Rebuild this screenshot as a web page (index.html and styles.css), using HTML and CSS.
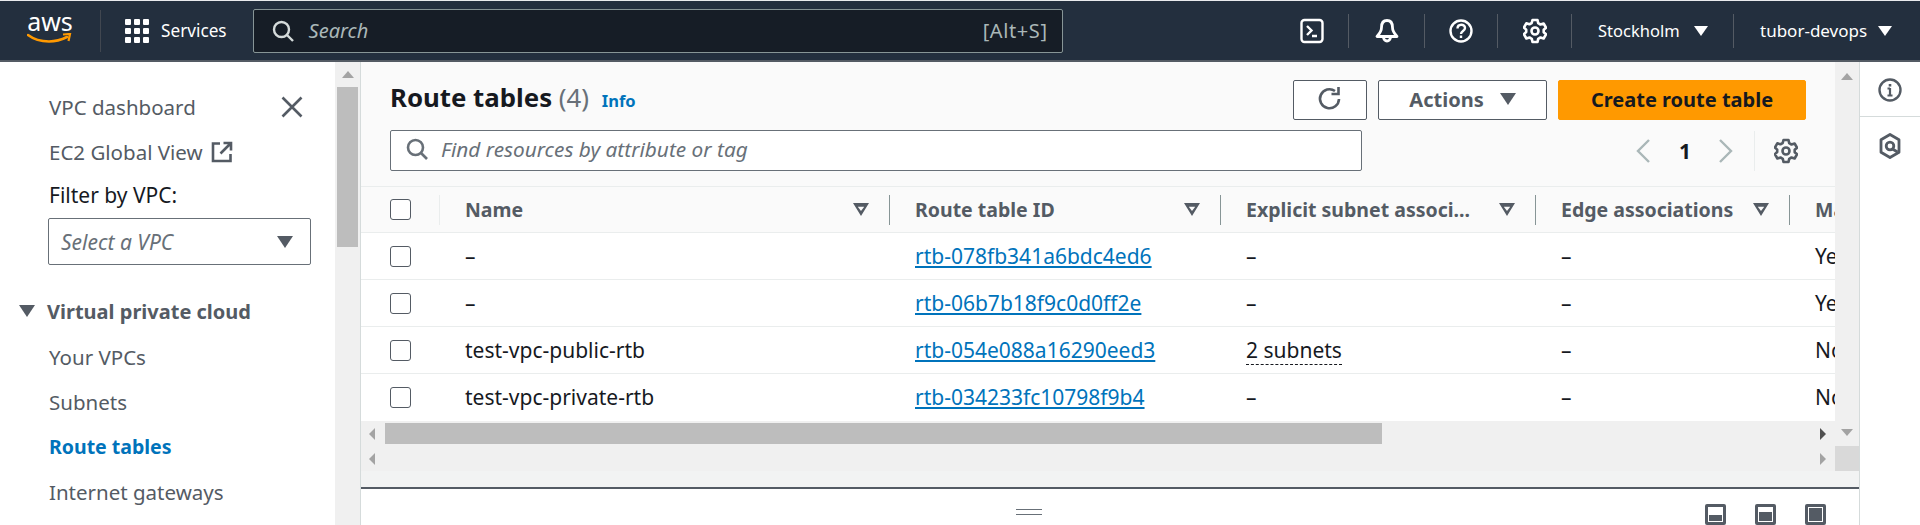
FILE: index.html
```html
<!DOCTYPE html>
<html lang="en">
<head>
    <meta charset="UTF-8">
    <title>Route tables | VPC Console</title>
    <link rel="stylesheet" href="styles.css">
</head>
<body>
    <header class="topbar">
        <div class="logo">
            <span class="logo-text">aws</span>
            <svg class="logo-smile" width="46" height="12" viewBox="0 0 46 12"><path d="M1 2c6 4.500 13 6.500 21 6.500 6 0 12-1.500 18-4.500" fill="none" stroke="#f90" stroke-width="2.600" stroke-linecap="round"/><path d="M36 1.500l7-.5-1.500 7" fill="none" stroke="#f90" stroke-width="2.200"/></svg>
        </div>
        <div class="services">
            <svg width="24" height="24" viewBox="0 0 24 24" fill="#fff"><rect width="6" height="6" rx="1"/><rect x="9" width="6" height="6" rx="1"/><rect x="18" width="6" height="6" rx="1"/><rect y="9" width="6" height="6" rx="1"/><rect x="9" y="9" width="6" height="6" rx="1"/><rect x="18" y="9" width="6" height="6" rx="1"/><rect y="18" width="6" height="6" rx="1"/><rect x="9" y="18" width="6" height="6" rx="1"/><rect x="18" y="18" width="6" height="6" rx="1"/></svg>
            <span>Services</span>
        </div>
        <div class="top-search">
            <svg width="22" height="22" viewBox="0 0 22 22" fill="none" stroke="#d5dbdb" stroke-width="2.400"><circle cx="9.500" cy="9.500" r="7.500"/><path d="M15 15l6 6"/></svg>
            <span class="top-search-text">Search</span>
            <span class="top-search-key">[Alt+S]</span>
        </div>
        <div class="top-right">
            <div class="top-item item-term">
                <svg width="24" height="26" viewBox="0 0 24 26" fill="none" stroke="#fff" stroke-width="2.400"><rect x="1.500" y="2" width="21" height="22" rx="3"/><path d="M7 8l4.500 4.500L7 17M12 18h5"/></svg>
            </div>
            <div class="top-item item-bell">
                <svg width="24" height="26" viewBox="0 0 24 26" fill="none" stroke="#fff" stroke-width="2.800" stroke-linejoin="round"><path d="M12 2.500c-4 0-5.500 3-5.500 7 0 4-2 6-4.500 9h20c-2.500-3-4.500-5-4.500-9 0-4-1.500-7-5.500-7z"/><path d="M8.500 19a3.500 4 0 0 0 7 0"/></svg>
            </div>
            <div class="top-item item-help">
                <svg width="24" height="24" viewBox="0 0 24 24" fill="none" stroke="#fff" stroke-width="2.400"><circle cx="12" cy="12" r="10.500"/><path d="M8.500 9.500c0-5 7.500-5 7.500-.5 0 3-4 3-4 6"/><path d="M12 16.500v2.500"/></svg>
            </div>
            <div class="top-item item-gear">
                <svg width="24" height="26" viewBox="0 0 24 26" fill="none" stroke="#fff" stroke-width="2.600" stroke-linejoin="round"><use href="#gear-shape"/></svg>
            </div>
            <div class="top-item top-menu top-region">Stockholm <span class="caret-white"></span></div>
            <div class="top-item top-menu top-user">tubor-devops <span class="caret-white"></span></div>
        </div>
    </header>

    <svg class="defs" width="0" height="0"><defs>
        <g id="gear-shape"><path d="M9.500 2h5l.7 3.200 2.300 1.300 3.100-1 2.400 4.200-2.300 2.100v2.400l2.300 2.100-2.400 4.200-3.100-1-2.300 1.300-.7 3.200h-5l-.7-3.200-2.300-1.300-3.100 1L.9 16.100l2.300-2.100v-2.400L.9 9.500l2.400-4.200 3.100 1 2.300-1.300z"/><circle cx="12" cy="13" r="3.500"/></g>
    </defs></svg>

    <div class="main">
        <nav class="sidebar">
            <div class="nav-top">
                <a class="nav-link">VPC dashboard</a>
                <svg width="22" height="22" viewBox="0 0 22 22" stroke="#545b64" stroke-width="2.600"><path d="M1.500 1.500l19 19M20.500 1.500l-19 19"/></svg>
            </div>
            <a class="nav-link nav-row">EC2 Global View
                <svg width="22" height="22" viewBox="0 0 22 22" fill="none" stroke="#545b64" stroke-width="2.600"><path d="M9 2.500H2v17.500h17.500V13"/><path d="M12.500 2h7.500v7.500M20 2L9.500 12.500"/></svg>
            </a>
            <div class="filter-label">Filter by VPC:</div>
            <div class="vpc-select">
                <span>Select a VPC</span>
                <span class="caret-gray"></span>
            </div>
            <div class="nav-group"><span class="caret-gray"></span>Virtual private cloud</div>
            <a class="nav-link nav-row">Your VPCs</a>
            <a class="nav-link nav-row">Subnets</a>
            <a class="nav-link nav-row nav-active">Route tables</a>
            <a class="nav-link nav-row">Internet gateways</a>
        </nav>
        <div class="side-scroll">
            <span class="arrow-up"></span>
            <div class="side-thumb"></div>
        </div>

        <div class="center">
            <div class="scroller">
                <section class="page">
                    <div class="page-head">
                        <div class="head-row">
                            <h1>Route tables <span class="count">(4)</span> <a class="info">Info</a></h1>
                            <button class="btn btn-refresh">
                                <svg width="26" height="26" viewBox="0 0 26 26" fill="none" stroke="#545b64" stroke-width="2.600"><path d="M22 13a9.500 9.500 0 1 1-4-8"/><path d="M21.500 1v7h-7"/></svg>
                            </button>
                            <button class="btn btn-actions">Actions <span class="caret-gray"></span></button>
                            <button class="btn btn-primary">Create route table</button>
                        </div>
                        <div class="tool-row">
                            <div class="res-filter">
                                <svg width="22" height="22" viewBox="0 0 22 22" fill="none" stroke="#687078" stroke-width="2.600"><circle cx="9.500" cy="9.500" r="7.500"/><path d="M15 15l6 6"/></svg>
                                <span>Find resources by attribute or tag</span>
                            </div>
                            <div class="pager">
                                <svg width="16" height="26" viewBox="0 0 16 26" fill="none" stroke="#aab7b8" stroke-width="2.400"><path d="M14 2L3 13l11 11"/></svg>
                                <span class="page-num">1</span>
                                <svg width="16" height="26" viewBox="0 0 16 26" fill="none" stroke="#aab7b8" stroke-width="2.400"><path d="M2 2l11 11L2 24"/></svg>
                                <div class="pager-gear">
                                    <svg width="24" height="26" viewBox="0 0 24 26" fill="none" stroke="#545b64" stroke-width="2.600" stroke-linejoin="round"><use href="#gear-shape"/></svg>
                                </div>
                            </div>
                        </div>
                    </div>

                    <div class="table-wrap">
                        <table class="rt-table">
                            <colgroup>
                                <col class="col-check"><col class="col-name"><col class="col-id"><col class="col-subnet"><col class="col-edge"><col class="col-main">
                            </colgroup>
                            <thead>
                                <tr>
                                    <th><div class="th-in th-check"><span class="check"></span></div></th>
                                    <th><div class="th-in">Name<span class="sort"></span></div></th>
                                    <th><div class="th-in">Route table ID<span class="sort"></span></div></th>
                                    <th><div class="th-in">Explicit subnet associ...<span class="sort"></span></div></th>
                                    <th><div class="th-in">Edge associations<span class="sort"></span></div></th>
                                    <th><div class="th-in th-last">Main</div></th>
                                </tr>
                            </thead>
                            <tbody>
                                <tr><td class="td-check"><span class="check"></span></td><td>–</td><td><a class="link">rtb-078fb341a6bdc4ed6</a></td><td>–</td><td>–</td><td>Yes</td></tr>
                                <tr><td class="td-check"><span class="check"></span></td><td>–</td><td><a class="link">rtb-06b7b18f9c0d0ff2e</a></td><td>–</td><td>–</td><td>Yes</td></tr>
                                <tr><td class="td-check"><span class="check"></span></td><td>test-vpc-public-rtb</td><td><a class="link">rtb-054e088a16290eed3</a></td><td><span class="dotted">2 subnets</span></td><td>–</td><td>No</td></tr>
                                <tr><td class="td-check"><span class="check"></span></td><td>test-vpc-private-rtb</td><td><a class="link">rtb-034233fc10798f9b4</a></td><td>–</td><td>–</td><td>No</td></tr>
                            </tbody>
                        </table>
                    </div>

                    <div class="hbar hbar-main">
                        <span class="arrow-left"></span>
                        <div class="hbar-thumb"></div>
                        <span class="arrow-right arrow-dark"></span>
                    </div>
                    <div class="hbar hbar-second">
                        <span class="arrow-left"></span>
                        <span class="arrow-right"></span>
                    </div>
                </section>
                <div class="page-scroll">
                    <div class="page-track">
                        <span class="arrow-up"></span>
                        <span class="arrow-down"></span>
                    </div>
                    <div class="page-corner"></div>
                </div>
            </div>

            <div class="split-panel">
                <div class="handle"></div>
                <div class="panel-icons">
                    <span class="panel-icon"><span class="fill-low"></span></span>
                    <span class="panel-icon"><span class="fill-mid"></span></span>
                    <span class="panel-icon"><span class="fill-full"></span></span>
                </div>
            </div>
        </div>

        <aside class="rail">
            <div class="rail-item rail-first">
                <svg width="24" height="24" viewBox="0 0 24 24" fill="none" stroke="#545b64" stroke-width="2.400"><circle cx="12" cy="12" r="10.500"/><path d="M12 10v8M9.500 10.500H12M9.500 17.500h5" stroke-width="2.200"/><path d="M12 6v2.500" stroke-width="2.600"/></svg>
            </div>
            <div class="rail-item">
                <svg width="22" height="26" viewBox="0 0 22 26" fill="none" stroke="#545b64" stroke-width="2.800" stroke-linejoin="round"><path d="M11 1.500l9 5.200v12.600l-9 5.200-9-5.200V6.700z"/><circle cx="11" cy="13" r="3.800"/><path d="M13.500 16l5 3"/></svg>
            </div>
        </aside>
    </div>
</body>
</html>
```

FILE: styles.css
```css
html, body { margin: 0; padding: 0; height: 100%; overflow: hidden; }
body { font-family: "Noto Sans", "Liberation Sans", sans-serif; font-size: 21px; color: #16191f; background: #fff; }
.defs { display: block; height: 0; }

/* top bar */
.topbar { display: flex; align-items: center; height: 59px; border-top: 1px solid #e9ebed; border-bottom: 2px solid #545b64; background: #232f3e; color: #fff; }
.logo { display: flex; flex-direction: column; align-items: center; width: 46px; margin-left: 27px; padding-right: 27px; border-right: 1px solid #414750; height: 42px; }
.logo-text { font-size: 25px; line-height: 26px; margin-top: -2px; }
.logo-smile { margin-top: -1px; flex-shrink: 0; }
.services { display: flex; align-items: center; gap: 12px; margin-left: 24px; font-size: 17.200px; }
.top-search { display: flex; align-items: center; width: 810px; height: 44px; margin-left: 26px; padding: 0 14px 0 18px; box-sizing: border-box; background: #161d26; border: 1px solid #879596; border-radius: 2px; font-size: 20px; }
.top-search-text { margin-left: 15px; font-style: italic; color: #aab7b8; flex: 1; }
.top-search-key { color: #aab7b8; letter-spacing: .6px; }
.top-right { display: flex; align-items: center; margin-left: auto; }
.top-item { display: flex; align-items: center; justify-content: center; box-sizing: border-box; height: 34px; border-right: 1px solid #545b64; }
.item-term { width: 74px; }
.item-bell { width: 76px; }
.item-help { width: 73px; }
.item-gear { width: 74px; }
.top-menu { justify-content: flex-start; padding-left: 26px; }
.top-region { width: 162px; gap: 14px; font-size: 16.500px; }
.top-user { width: 186px; gap: 11px; border-right: none; font-size: 17px; }
.caret-white { display: inline-block; border-left: 7px solid transparent; border-right: 7px solid transparent; border-top: 10px solid #fff; }
.caret-gray { display: inline-block; border-left: 8px solid transparent; border-right: 8px solid transparent; border-top: 12px solid #545b64; }

/* layout */
.main { display: flex; height: 464px; }
.sidebar { width: 335px; flex-shrink: 0; padding-top: 22px; box-sizing: border-box; color: #545b64; font-size: 20.500px; }
.nav-top { display: flex; align-items: center; justify-content: space-between; height: 45px; padding: 0 32px 0 49px; }
.nav-link { color: #545b64; }
.nav-row { display: flex; align-items: center; gap: 8px; height: 45px; padding-left: 49px; }
.nav-active { color: #0073bb; font-weight: 700; font-size: 19.500px; }
.filter-label { height: 44px; line-height: 42px; padding-left: 49px; color: #16191f; font-size: 21px; }
.vpc-select { display: flex; align-items: center; justify-content: space-between; width: 263px; height: 47px; margin-left: 48px; padding: 0 17px 0 12px; box-sizing: border-box; border: 1px solid #687078; border-radius: 2px; font-style: italic; font-size: 21px; color: #687078; }
.nav-group { display: flex; align-items: center; gap: 12px; height: 46px; margin-top: 23px; padding-left: 19px; font-weight: 700; font-size: 20px; }
.side-scroll { width: 25px; flex-shrink: 0; padding-top: 9px; background: #f0f0f0; border-right: 1px solid #d5dbdb; text-align: center; }
.side-thumb { width: 21px; height: 160px; margin: 9px auto 0; background: #bdbdbd; }
.arrow-up { display: block; width: 0; margin: 0 auto; border-left: 6px solid transparent; border-right: 6px solid transparent; border-bottom: 7px solid #a3a3a3; }
.arrow-down { display: block; width: 0; margin: 0 auto; border-left: 6px solid transparent; border-right: 6px solid transparent; border-top: 7px solid #a3a3a3; }

.center { display: flex; flex-direction: column; width: 1498px; flex-shrink: 0; }
.scroller { display: flex; height: 425px; flex-shrink: 0; background: #f2f3f3; }
.page { width: 1474px; flex-shrink: 0; }
.page-head { height: 125px; padding: 18px 29px 0; box-sizing: border-box; background: #fafafa; border-bottom: 1px solid #eaeded; }
.head-row { display: flex; align-items: center; gap: 11px; height: 40px; }
h1 { margin: 0 auto 7px 0; font-size: 25.800px; font-weight: 700; color: #16191f; }
.count { font-weight: 400; color: #687078; }
.info { margin-left: 6px; font-size: 16.500px; color: #0073bb; }
.btn { height: 40px; padding: 0 0 2px; box-sizing: border-box; border: 1px solid #545b64; border-radius: 2px; background: #fff; font-family: inherit; font-size: 20px; font-weight: 700; color: #545b64; display: flex; align-items: center; justify-content: center; }
.btn-refresh { width: 74px; }
.btn-actions { width: 169px; gap: 16px; }
.btn-primary { width: 248px; background: #ff9900; border-color: #ff9900; color: #16191f; }
.tool-row { display: flex; align-items: center; margin-top: 9px; }
.res-filter { display: flex; align-items: center; gap: 13px; width: 972px; height: 41px; padding: 0 0 2px 15px; box-sizing: border-box; background: #fff; border: 1px solid #687078; border-radius: 2px; font-style: italic; font-size: 20.800px; color: #687078; }
.pager { display: flex; align-items: center; margin-left: auto; padding-top: 2px; }
.page-num { margin: 0 27px 0 28px; font-weight: 700; font-size: 21px; }
.pager-gear { display: flex; align-items: center; height: 40px; margin-left: 20px; padding-left: 19px; padding-right: 8px; border-left: 1px solid #eaeded; }

/* table */
.table-wrap { height: 234px; overflow: hidden; background: #fff; }
.rt-table { table-layout: fixed; width: 1489px; border-collapse: collapse; }
.col-check { width: 79px; }
.col-name { width: 450px; }
.col-id { width: 331px; }
.col-subnet { width: 315px; }
.col-edge { width: 254px; }
.col-main { width: 60px; }
.rt-table th { height: 45px; padding: 0; background: #fafafa; border-bottom: 1px solid #eaeded; font-size: 19.500px; font-weight: 700; color: #545b64; text-align: left; }
.th-in { display: flex; align-items: center; justify-content: space-between; height: 30px; padding: 0 20px 0 25px; border-right: 1px solid #879596; white-space: nowrap; }
.th-check { padding: 0 0 0 29px; border-right-color: #eaeded; }
.th-last { border-right: none; }
.sort { display: inline-block; width: 16px; height: 13px; background: #545b64; clip-path: polygon(0 0, 100% 0, 50% 100%, 50% 62%, 70% 28%, 30% 28%, 50% 62%, 50% 100%); }
.rt-table td { height: 46px; padding: 0 0 0 25px; border-bottom: 1px solid #eaeded; white-space: nowrap; overflow: hidden; }
.rt-table tr:last-child td { border-bottom: none; }
.rt-table td.td-check { padding-left: 29px; }
.check { display: block; width: 19px; height: 19px; border: 1px solid #545b64; border-radius: 3px; background: #fff; }
.link { color: #0073bb; text-decoration: underline; }
.dotted { border-bottom: 1px dashed #16191f; }

/* fake scrollbars */
.hbar { display: flex; align-items: center; justify-content: space-between; padding: 0 6px; background: #f0f0f0; }
.hbar-main { height: 25px; }
.hbar-second { height: 25px; }
.hbar-thumb { width: 997px; height: 21px; margin: 0 auto 0 10px; background: #bdbdbd; }
.arrow-left { border-top: 6px solid transparent; border-bottom: 6px solid transparent; border-right: 6px solid #a3a3a3; margin-left: 2px; }
.arrow-right { border-top: 6px solid transparent; border-bottom: 6px solid transparent; border-left: 6px solid #a3a3a3; margin-right: 3px; }
.arrow-dark { border-left-color: #505050; }
.page-scroll { display: flex; flex-direction: column; width: 24px; flex-shrink: 0; }
.page-track { display: flex; flex-direction: column; justify-content: space-between; height: 384px; padding: 11px 0 10px; box-sizing: border-box; background: #f0f0f0; }
.page-corner { height: 25px; background: #d9d9d9; }

/* bottom panel */
.split-panel { display: flex; flex: 1; padding: 15px 33px 0 655px; box-sizing: border-box; border-top: 2px solid #545b64; background: #fff; }
.handle { width: 26px; height: 4px; margin-top: 5px; border-top: 1px solid #687078; border-bottom: 1px solid #687078; }
.panel-icons { display: flex; gap: 29px; margin-left: auto; }
.panel-icon { display: flex; align-items: flex-end; width: 21px; height: 21px; box-sizing: border-box; border: 3px solid #545b64; border-radius: 2px; padding: 1px; }
.panel-icon span { display: block; width: 100%; background: #545b64; }
.fill-low { height: 6px; }
.fill-mid { height: 9px; }
.fill-full { height: 100%; }

/* right rail */
.rail { flex: 1; border-left: 1px solid #d5dbdb; background: #fff; }
.rail-item { display: flex; justify-content: center; padding: 16px 0 12px 0; }
.rail-first { height: 55px; box-sizing: border-box; border-bottom: 1px solid #d5dbdb; }
```
